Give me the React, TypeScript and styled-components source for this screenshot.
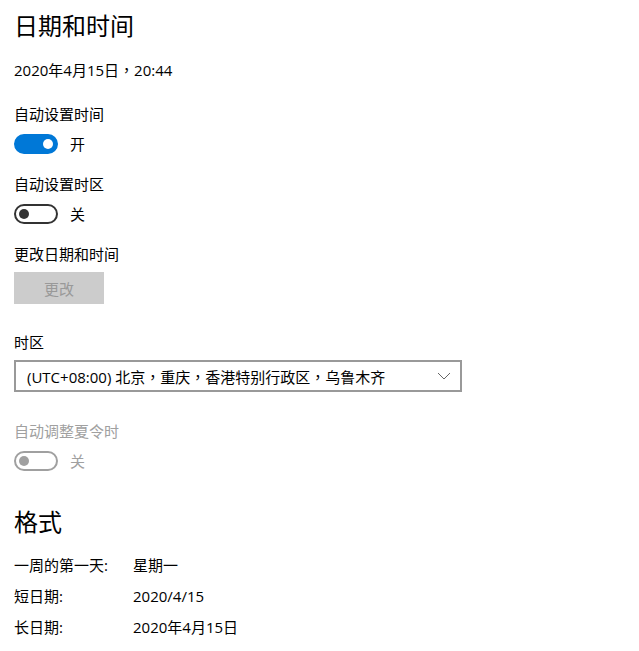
import React from "react";
import styled, { createGlobalStyle } from "styled-components";

const GlobalStyle = createGlobalStyle`
  body {
    margin: 0;
    background: #ffffff;
    font-family: "Open Sans", "Noto Sans CJK SC", sans-serif;
    color: #000000;
  }
`;

const Page = styled.div`
  display: flex;
  flex-direction: column;
  align-items: flex-start;
  padding: 10px 0 0 14px;
`;

const Title = styled.h1<{ $top?: number }>`
  margin: ${(p) => p.$top || 0}px 0 0 0;
  font-size: 24px;
  line-height: 32px;
  font-weight: 400;
`;

const Text = styled.div<{ $top?: number; $muted?: boolean }>`
  margin-top: ${(p) => p.$top || 0}px;
  font-size: 15px;
  line-height: 20px;
  color: ${(p) => (p.$muted ? "#a0a0a0" : "#000000")};
`;

// full-width comma drawn centred in its box, as the Windows UI font does
const Comma = styled.span`
  font-family: "Noto Sans CJK TC", sans-serif;
`;

const ToggleRow = styled.div<{ $top?: number }>`
  display: flex;
  align-items: center;
  gap: 12px;
  margin-top: ${(p) => p.$top || 0}px;
  font-size: 15px;
  line-height: 20px;
`;

const Track = styled.div<{ $on?: boolean; $disabled?: boolean }>`
  box-sizing: border-box;
  width: 44px;
  height: 20px;
  border-radius: 10px;
  display: flex;
  align-items: center;
  padding: 0 3px;
  justify-content: ${(p) => (p.$on ? "flex-end" : "flex-start")};
  background: ${(p) => (p.$on ? "#0078d7" : "#ffffff")};
  border: 2px solid
    ${(p) => (p.$on ? "#0078d7" : p.$disabled ? "#a0a0a0" : "#333333")};
`;

const Knob = styled.div<{ $on?: boolean; $disabled?: boolean }>`
  width: 10px;
  height: 10px;
  border-radius: 50%;
  background: ${(p) => (p.$on ? "#ffffff" : p.$disabled ? "#a0a0a0" : "#333333")};
`;

const ToggleLabel = styled.span<{ $disabled?: boolean }>`
  color: ${(p) => (p.$disabled ? "#a0a0a0" : "#000000")};
`;

const Button = styled.button`
  margin-top: 8px;
  width: 90px;
  height: 32px;
  border: none;
  background: #cccccc;
  color: #999999;
  font-family: inherit;
  font-size: 15px;
  padding: 0;
`;

const Select = styled.div`
  box-sizing: border-box;
  margin-top: 8px;
  width: 448px;
  height: 32px;
  border: 2px solid #999999;
  display: flex;
  align-items: center;
  justify-content: space-between;
  padding: 0 9px 0 11px;
  font-size: 15px;
`;

const InfoRow = styled.div<{ $top?: number }>`
  display: grid;
  grid-template-columns: 119px auto;
  margin-top: ${(p) => p.$top || 0}px;
  font-size: 15px;
  line-height: 20px;
`;

function Toggle({ on, disabled, label }: { on?: boolean; disabled?: boolean; label: string }) {
  return (
    <>
      <Track $on={on} $disabled={disabled}>
        <Knob $on={on} $disabled={disabled} />
      </Track>
      <ToggleLabel $disabled={disabled}>{label}</ToggleLabel>
    </>
  );
}

export default function App() {
  return (
    <>
      <GlobalStyle />
      <Page>
        <Title>日期和时间</Title>
        <Text $top={18}>
          2020年4月15日<Comma>，</Comma>20:44
        </Text>

        <Text $top={24}>自动设置时间</Text>
        <ToggleRow $top={10}>
          <Toggle on label="开" />
        </ToggleRow>

        <Text $top={20}>自动设置时区</Text>
        <ToggleRow $top={10}>
          <Toggle label="关" />
        </ToggleRow>

        <Text $top={20}>更改日期和时间</Text>
        <Button>更改</Button>

        <Text $top={28}>时区</Text>
        <Select>
          <span>
            (UTC+08:00) 北京<Comma>，</Comma>重庆<Comma>，</Comma>香港特别行政区
            <Comma>，</Comma>乌鲁木齐
          </span>
          <svg width="14" height="8" viewBox="0 0 14 8">
            <polyline points="1,1 7,7 13,1" fill="none" stroke="#666" strokeWidth="1" />
          </svg>
        </Select>

        <Text $top={29} $muted>
          自动调整夏令时
        </Text>
        <ToggleRow $top={10}>
          <Toggle disabled label="关" />
        </ToggleRow>

        <Title $top={35}>格式</Title>
        <InfoRow $top={17}>
          <span>一周的第一天:</span>
          <span>星期一</span>
        </InfoRow>
        <InfoRow $top={11}>
          <span>短日期:</span>
          <span>2020/4/15</span>
        </InfoRow>
        <InfoRow $top={11}>
          <span>长日期:</span>
          <span>2020年4月15日</span>
        </InfoRow>
      </Page>
    </>
  );
}
